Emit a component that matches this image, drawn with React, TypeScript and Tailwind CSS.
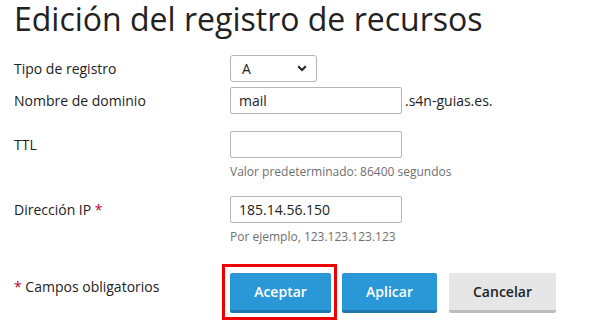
import React from "react";

const font = { fontFamily: '"Open Sans", "Liberation Sans", sans-serif' };

function Label({ children }: { children: React.ReactNode }) {
  return <div className="w-[216px] shrink-0 pt-[4px] text-[14px] leading-[20px] text-[#222]">{children}</div>;
}

function Req() {
  return <span className="text-[#c4002b]">*</span>;
}

export default function App() {
  return (
    <div className="w-[598px] h-[333px] bg-white overflow-hidden pl-[14px]" style={font}>
      <h1 className="text-[32px] leading-[38px] text-[#222] font-normal">Edición del registro de recursos</h1>

      <div className="flex mt-[17px]">
        <Label>Tipo de registro</Label>
        <div className="w-[87px] h-[27px] border border-[#b5b5b5] rounded-[3px] flex items-center justify-between pl-[11px] pr-[9px] text-[14px] text-[#222]">
          <span>A</span>
          <svg width="10" height="7" viewBox="0 0 10 7">
            <path d="M1.2 1.2 L5 5 L8.8 1.2" fill="none" stroke="#222" strokeWidth="2" />
          </svg>
        </div>
      </div>

      <div className="flex mt-[5px]">
        <Label>Nombre de dominio</Label>
        <div className="flex items-start">
          <div className="w-[172px] h-[27px] border border-[#b5b5b5] rounded-[2px] flex items-center pl-[8px] text-[14px] text-[#222]">mail</div>
          <div className="ml-[3px] pt-[4px] text-[14px] leading-[20px] text-[#222]">.s4n-guias.es.</div>
        </div>
      </div>

      <div className="flex mt-[17px]">
        <Label>TTL</Label>
        <div>
          <div className="w-[172px] h-[27px] border border-[#b5b5b5] rounded-[2px]"></div>
          <div className="mt-[6px] text-[12px] leading-[16px] text-[#6f6f6f]">Valor predeterminado: 86400 segundos</div>
        </div>
      </div>

      <div className="flex mt-[16px]">
        <Label>
          Dirección IP <Req />
        </Label>
        <div>
          <div className="w-[172px] h-[27px] border border-[#b5b5b5] rounded-[2px] flex items-center pl-[8px] text-[14px] text-[#222]">185.14.56.150</div>
          <div className="mt-[6px] text-[12px] leading-[16px] text-[#6f6f6f]">Por ejemplo, 123.123.123.123</div>
        </div>
      </div>

      <div className="flex mt-[28px]">
        <Label>
          <Req /> Campos obligatorios
        </Label>
        <div className="flex">
          <div className="relative">
            <div className="absolute left-[-8px] top-[-9px] w-[115px] h-[56px] border-[3px] border-[#f00000]"></div>
            <button className="w-[101px] h-[40px] bg-[#2a98d6] border-b-[3px] border-[#1f78ab] rounded-[2px] text-white text-[14px] font-semibold">
              Aceptar
            </button>
          </div>
          <button className="ml-[11px] w-[95px] h-[40px] bg-[#2a98d6] border-b-[3px] border-[#1f78ab] rounded-[2px] text-white text-[14px] font-semibold">
            Aplicar
          </button>
          <button className="ml-[12px] w-[107px] h-[40px] bg-[#e6e6e6] border-b-[3px] border-[#bcbcbc] rounded-[2px] text-[#222] text-[14px] font-semibold">
            Cancelar
          </button>
        </div>
      </div>
    </div>
  );
}
